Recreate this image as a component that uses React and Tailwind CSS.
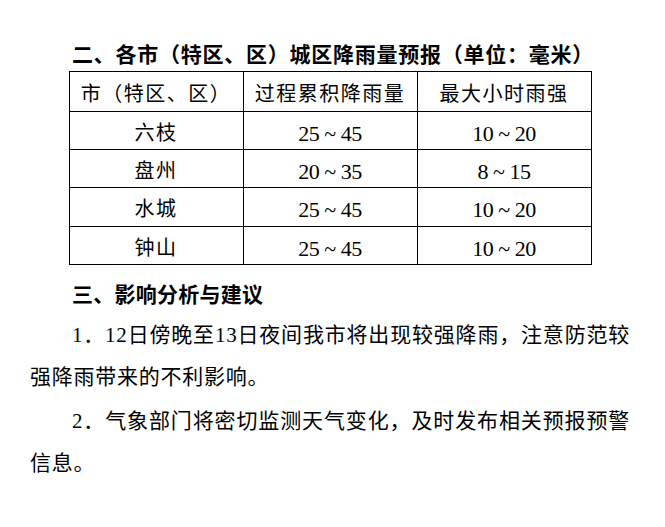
export default function App() {
  const rows = [
    { city: "六枝", total: "25 ~ 45", hourly: "10 ~ 20", h: "h-[38px]" },
    { city: "盘州", total: "20 ~ 35", hourly: "8 ~ 15", h: "h-[38px]" },
    { city: "水城", total: "25 ~ 45", hourly: "10 ~ 20", h: "h-[39px]" },
    { city: "钟山", total: "25 ~ 45", hourly: "10 ~ 20", h: "h-[38px]" },
  ];

  const cjk = "font-['Noto_Sans_CJK_SC',sans-serif] text-[20px] tracking-[1.5px] leading-[24px]";
  const num = "font-['Liberation_Serif',serif] text-[22px] tracking-[-0.5px] leading-[24px]";

  return (
    <div className="min-h-[527px] w-[665px] bg-white text-black font-['Liberation_Serif','Noto_Sans_CJK_SC',serif]">
      <div className="w-[600px] ml-[30px] pt-[38px]">
        {/* Section 2 heading */}
        <h2 className="pl-[42px] font-['Noto_Sans_CJK_SC',sans-serif] font-bold text-[21px] tracking-[0.75px] leading-[30px] whitespace-nowrap">
          二、各市（特区、区）城区降雨量预报（单位：毫米）
        </h2>

        {/* Rainfall table */}
        <div className="mt-[3px] mx-auto w-[523px] grid grid-cols-3 border-r border-b border-black">
          <div className={`h-[40px] border-t border-l border-black text-center pt-[9px] ${cjk}`}>市（特区、区）</div>
          <div className={`h-[40px] border-t border-l border-black text-center pt-[9px] ${cjk}`}>过程累积降雨量</div>
          <div className={`h-[40px] border-t border-l border-black text-center pt-[9px] ${cjk}`}>最大小时雨强</div>
          {rows.map((r) => (
            <div key={r.city} className="contents">
              <div className={`${r.h} border-t border-l border-black text-center pt-[8px] ${cjk}`}>{r.city}</div>
              <div className={`${r.h} border-t border-l border-black text-center pt-[10px] ${num}`}>{r.total}</div>
              <div className={`${r.h} border-t border-l border-black text-center pt-[10px] ${num}`}>{r.hourly}</div>
            </div>
          ))}
        </div>

        {/* Section 3 heading */}
        <h2 className="mt-[7px] pl-[42px] font-['Noto_Sans_CJK_SC',sans-serif] font-bold text-[21px] tracking-[0.25px] leading-[42px]">
          三、影响分析与建议
        </h2>

        {/* Paragraphs */}
        <div className="text-[21px] tracking-[0.75px] leading-[42px]">
          <p className="indent-[42px] text-justify [text-align-last:justify]">
            1．12日傍晚至13日夜间我市将出现较强降雨，注意防范较
          </p>
          <p>强降雨带来的不利影响。</p>
          <p className="mt-[2px] indent-[42px] text-justify [text-align-last:justify]">
            2．气象部门将密切监测天气变化，及时发布相关预报预警
          </p>
          <p>信息。</p>
        </div>
      </div>
    </div>
  );
}
